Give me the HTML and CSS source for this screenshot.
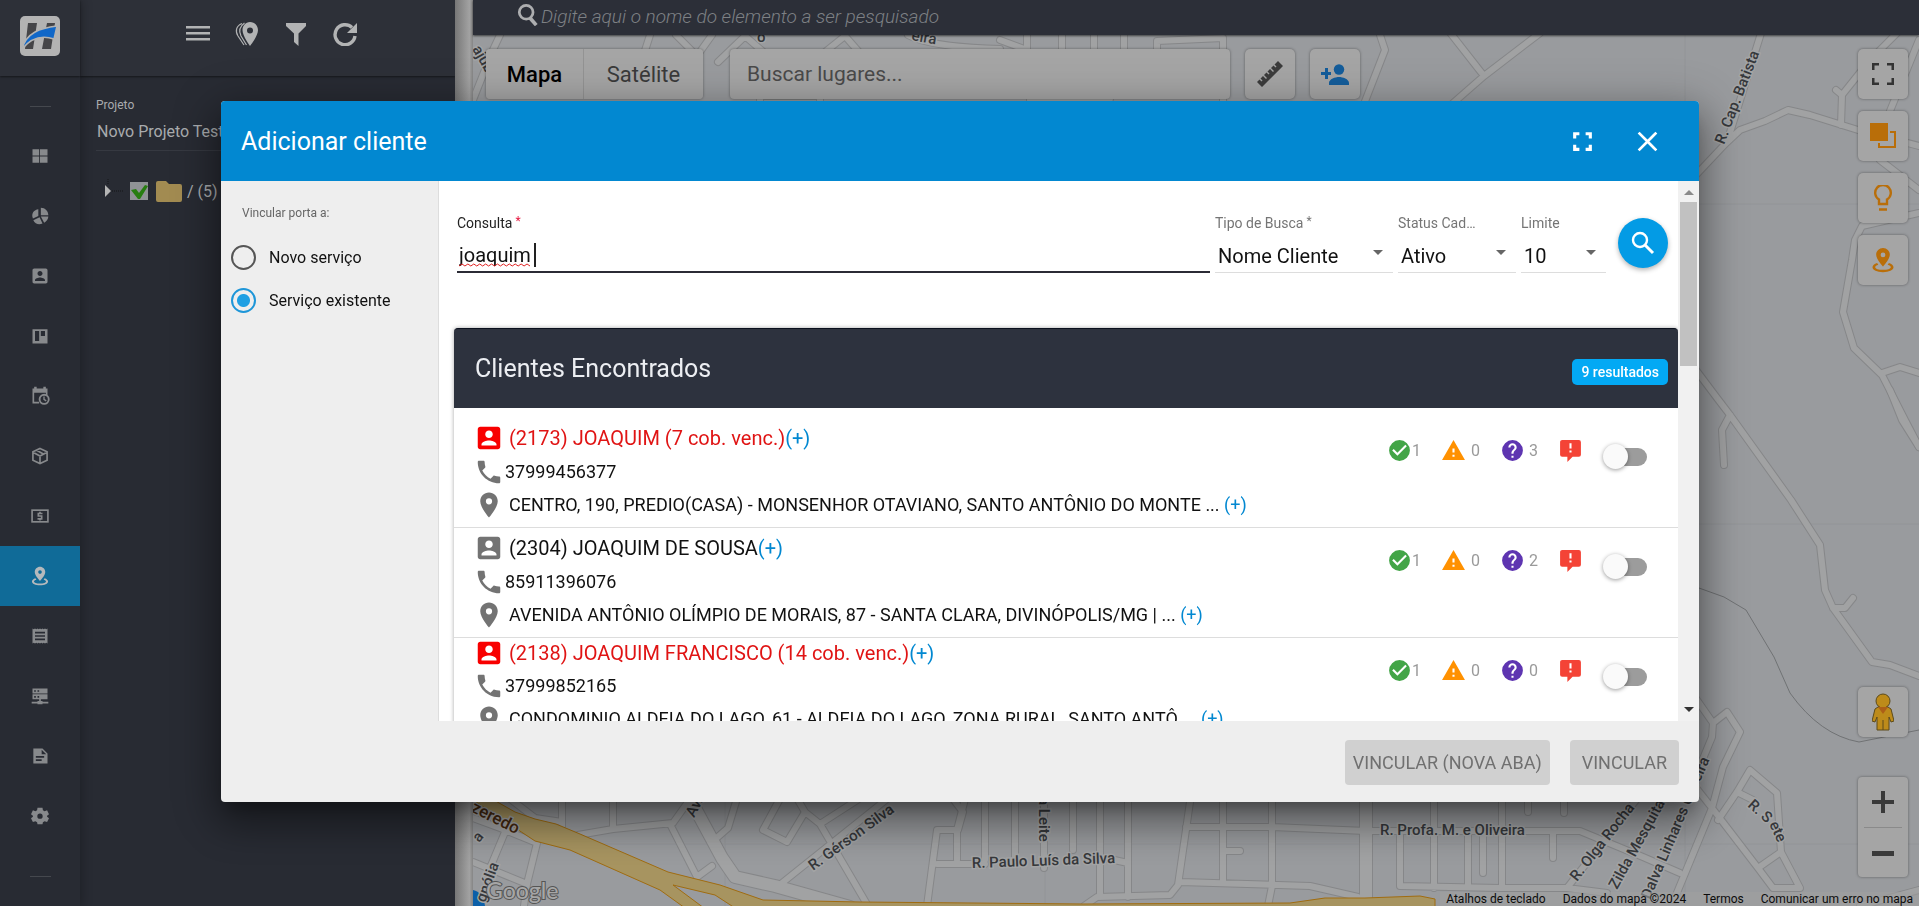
FILE: index.html
```html
<!DOCTYPE html>
<html lang="pt-BR">
<head>
<meta charset="utf-8">
<title>Adicionar cliente</title>
<link rel="stylesheet" href="styles.css">
</head>
<body>
<svg class="sprite" aria-hidden="true">
  <symbol id="i-user" viewBox="0 0 24 24"><path fill-rule="evenodd" d="M3 5v14c0 1.100.9 2 2 2h14c1.100 0 2-.9 2-2V5c0-1.100-.9-2-2-2H5c-1.100 0-2 .9-2 2zm12 4c0 1.660-1.340 3-3 3s-3-1.340-3-3 1.340-3 3-3 3 1.340 3 3zm-9 8c0-2 4-3.100 6-3.100s6 1.100 6 3.100v1H6v-1z"/></symbol>
  <symbol id="i-phone" viewBox="0 0 24 24"><path d="M6.620 10.790c1.440 2.830 3.760 5.140 6.590 6.590l2.200-2.200c.27-.27.67-.36 1.020-.24 1.120.37 2.330.57 3.570.57.55 0 1 .45 1 1V20c0 .55-.45 1-1 1C10.610 21 3 13.390 3 4c0-.55.45-1 1-1h3.500c.55 0 1 .45 1 1 0 1.250.2 2.450.57 3.570.11.35.03.74-.25 1.020l-2.200 2.200z"/></symbol>
  <symbol id="i-place" viewBox="0 0 24 24"><path fill-rule="evenodd" d="M12 2C8.130 2 5 5.130 5 9c0 5.250 7 13 7 13s7-7.750 7-13c0-3.870-3.130-7-7-7zm0 9.500a2.500 2.500 0 1 1 0-5 2.500 2.500 0 0 1 0 5z"/></symbol>
  <symbol id="i-check" viewBox="0 0 24 24"><path fill-rule="evenodd" d="M12 2a10 10 0 1 0 0 20 10 10 0 0 0 0-20zm-2 15-5-5 1.410-1.410L10 14.170l7.590-7.590L19 8z"/></symbol>
  <symbol id="i-warn" viewBox="0 0 24 24"><path fill-rule="evenodd" d="M1 21h22L12 2zm12-3h-2v-2h2zm0-4h-2v-4h2z"/></symbol>
  <symbol id="i-help" viewBox="0 0 24 24"><path fill-rule="evenodd" d="M12 2a10 10 0 1 0 0 20 10 10 0 0 0 0-20zm1 17h-2v-2h2zm2.070-7.750-.9.920C13.450 12.900 13 13.500 13 15h-2v-.5c0-1.100.45-2.100 1.170-2.830l1.240-1.260c.37-.36.59-.86.59-1.410a2 2 0 1 0-4 0H8a4 4 0 1 1 8 0c0 .88-.36 1.680-.93 2.250z"/></symbol>
  <symbol id="i-feedback" viewBox="0 0 24 24"><path fill-rule="evenodd" d="M4 2h16a2 2 0 0 1 2 2v12a2 2 0 0 1-2 2h-6l-5 5v-5H4a2 2 0 0 1-2-2V4c0-1.100.9-2 2-2zm9 12h-2v-2h2zm0-4h-2V5h2z"/></symbol>
  <symbol id="i-fullscreen" viewBox="0 0 24 24"><path d="M3 9V3h6v3H6v3zM15 3h6v6h-3V6h-3zM21 15v6h-6v-3h3v-3zM9 21H3v-6h3v3h3z"/></symbol>
  <symbol id="i-pinring" viewBox="0 0 24 24"><path fill-rule="evenodd" d="M12 1C8.500 1 5.700 3.800 5.700 7.200 5.700 11.500 12 18 12 18s6.300-6.500 6.300-10.800C18.300 3.800 15.500 1 12 1zm0 8.500a2.200 2.200 0 1 1 0-4.400 2.200 2.200 0 0 1 0 4.400z"/><path d="M6.500 14.700C4 15.500 2.300 17 2.300 18.700c0 2.700 4.300 4.500 9.700 4.500s9.700-1.800 9.700-4.500c0-1.700-1.700-3.200-4.200-4l-1.200 1.700c1.800.5 2.900 1.300 2.900 2.200 0 1.400-3.200 2.500-7.200 2.500s-7.200-1.100-7.200-2.500c0-.9 1.100-1.700 2.900-2.200z"/></symbol>
</svg>

<div class="app">
  <nav class="rail" aria-label="Principal">
    <a class="logo" href="#" aria-label="Início"><svg viewBox="0 0 40 40"><rect width="40" height="40" rx="5" fill="#b3b3b3"/><path d="M8 7h9l-4 26H5zM27 7h8l-4 26h-9z" fill="#454548"/><path d="M2 33C6 17 20 12 37 10l-3 13C22 19 11 22 2 33z" fill="#1067c8" stroke="#b3b3b3" stroke-width="1.500"/></svg></a>
    <div class="rail-sep"></div>
    <a class="rail-item" href="#" aria-label="Painel"><svg viewBox="0 0 24 24"><path d="M3 4h8v7.500H3zM12 4h9v7.500h-9zM3 12.500h8V20H3zM12 12.500h9V20h-9z"/></svg></a>
    <a class="rail-item" href="#" aria-label="Gráficos"><svg viewBox="0 0 24 24"><path d="M13 2c5 0 9 4 9 9h-9zM10 4v8l-6.500 3C1 9 5 4.500 10 4zM11.500 13.500 15 21c-5 2-9 0-11-4zM13 12.500h9c0 3-2 6-5 7.500z"/></svg></a>
    <a class="rail-item" href="#" aria-label="Clientes"><svg><use href="#i-user"/></svg></a>
    <a class="rail-item" href="#" aria-label="Quadro"><svg viewBox="0 0 24 24"><path fill-rule="evenodd" d="M3 4h18v17H3zm3 2v12h5V6zm7 0v6h5V6z"/></svg></a>
    <a class="rail-item" href="#" aria-label="Agenda"><svg viewBox="0 0 24 24"><path d="M3 3h2V1h3v2h8V1h3v2h2v8h-2V8H5v11h6v2H3z"/><circle cx="17" cy="16" r="5.500" fill="none" stroke="currentColor" stroke-width="2.200"/><path d="M16 12.500h1.600v3.200l2.300 1.500-.9 1.300-3-2z"/></svg></a>
    <a class="rail-item" href="#" aria-label="Estoque"><svg viewBox="0 0 24 24" fill="none" stroke="currentColor" stroke-width="2"><path d="m12 3 8.500 4v10L12 21l-8.500-4V7zM3.500 7.500 12 12l8.500-4.500M12 12v9M8 5l8 4.500"/></svg></a>
    <a class="rail-item" href="#" aria-label="Financeiro"><svg viewBox="0 0 24 24" fill="none" stroke="currentColor" stroke-width="2"><rect x="2.500" y="5" width="19" height="14"/><path d="M15 9h-5v3h4v3.500H9M12 7v2m0 6v2.500"/></svg></a>
    <a class="rail-item active" href="#" aria-label="Mapa"><svg><use href="#i-pinring"/></svg></a>
    <a class="rail-item" href="#" aria-label="Notas"><svg viewBox="0 0 24 24"><path fill-rule="evenodd" d="m3 3 1.500 1L6 3l1.500 1L9 3l1.500 1L12 3l1.500 1L15 3l1.500 1L18 3l1.500 1L21 3v18l-1.500-1-1.500 1-1.500-1-1.500 1-1.500-1-1.500 1-1.500-1L9 21l-1.500-1L6 21l-1.500-1L3 21zm3 4v2h12V7zm0 4v2h12v-2zm0 4v2h12v-2z"/></svg></a>
    <a class="rail-item" href="#" aria-label="Servidores"><svg viewBox="0 0 24 24"><path fill-rule="evenodd" d="M3 3h18v6H3zm2 2v2h2V5zm4 0v2h2V5zM3 10h18v6H3zm2 2v2h2v-2zm4 0v2h2v-2zM11 16h2v2h2v1h7v2h-7v1H9v-1H2v-2h7v-1h2z"/></svg></a>
    <a class="rail-item" href="#" aria-label="Documentos"><svg viewBox="0 0 24 24"><path fill-rule="evenodd" d="M5 3h10l6 6v12H4V3zm9 1.500V10h5.500zM7 12v2h10v-2zm0 4v2h7v-2z"/></svg></a>
    <a class="rail-item" href="#" aria-label="Configurações"><svg viewBox="0 0 24 24"><path fill-rule="evenodd" d="M9 2h6l.5 3 2 1.200 3-1 2.300 4.600-2.300 2v1l2.300 2-2.300 4.400-3-1-2 1.200L15 22H9l-.5-2.600-2-1.200-3 1-2.300-4.400 2.300-2v-1l-2.300-2 2.300-4.600 3 1 2-1.200zm3 7a3.200 3.200 0 1 0 0 6.400A3.200 3.200 0 0 0 12 9z"/></svg></a>
    <div class="rail-sep end"></div>
  </nav>

  <aside class="project">
    <div class="project-bar">
      <button aria-label="Menu"><svg viewBox="0 0 24 24"><path d="M0 4h24v2.500H0zM0 10h24v2.500H0zM0 16h24v2.500H0z"/></svg></button>
      <button aria-label="Marcadores"><svg viewBox="0 0 24 24"><path fill-rule="evenodd" d="M15 0C10.500 0 7.500 3.700 7.500 8.300 7.500 14 15 24 15 24s8-10 8-15.700C23 3.700 19.500 0 15 0zm0 11.500a3 3 0 1 1 0-6 3 3 0 0 1 0 6z"/><path d="M7 1.500C1 4 0 9 3 14l6 9M9.500 1C4 5 3.500 9 6 14l5.500 9" fill="none" stroke="currentColor" stroke-width="1.200"/></svg></button>
      <button aria-label="Filtrar"><svg viewBox="0 0 24 24"><path d="M2 1h20v3l-7.500 7.500V24L10 20v-8.500L2 4z"/></svg></button>
      <button aria-label="Atualizar"><svg viewBox="0 0 24 24"><path d="M19 5.500A10 10 0 1 0 22 14" fill="none" stroke="currentColor" stroke-width="3.400"/><path d="M24 1v10H14z"/></svg></button>
    </div>
    <div class="project-body">
      <span class="project-label">Projeto</span>
      <div class="project-name">Novo Projeto Teste</div>
      <div class="tree">
        <svg class="tree-arrow" viewBox="0 0 20 24"><path d="M4 0v5M8 12h13" stroke="#151719" stroke-dasharray="1 1" fill="none"/><path d="m1 6 6 6-6 6z" fill="#b5b5b5"/></svg>
        <svg class="tree-check" viewBox="0 0 18 18"><path d="M0 0h18v18H0z" fill="#909396"/><path d="m1 8 5-1 3 4 6-8 3 1-8 13H8z" fill="#277d11"/></svg>
        <svg class="tree-folder" viewBox="0 0 26 21"><path d="M2 0h8l3 3h11q2 0 2 2v14q0 2-2 2H2q-2 0-2-2V2q0-2 2-2z" fill="#a28b51"/></svg>
        <span>/ (5)</span>
      </div>
    </div>
  </aside>
  <div class="splitter"></div>

  <main class="map-col">
    <div class="topbar">
      <svg viewBox="0 0 24 24" fill="none" stroke="currentColor" stroke-width="3"><circle cx="10" cy="9" r="7.500"/><path d="m14 15 7 8" stroke-width="4"/></svg>
      <input class="element-search" type="text" placeholder="Digite aqui o nome do elemento a ser pesquisado" aria-label="Pesquisar elemento">
    </div>
    <div class="map">
      <svg class="map-canvas" viewBox="473 35 1446 871" preserveAspectRatio="xMinYMin slice" aria-label="Mapa">
        <defs>
          <g id="roads">
            <path d="M500 35 492 52 473 100M650 35 642 60M676 35 697 56 712 35M718 62 745 36 775 62M815 60 845 36 866 60M908 35Q930 47 1000 49M1000 40 1027 50M1027 35V60M1062 35V60M1094 35V60M1124 35V60M1157 60V41L1223 38V101M1380 35 1385 50 1364 104M1448 30 1484 76 1540 33M1484 76 1452 104M760 101V96H820V104M1030 104V99H1110"/>
            <path d="M1762 30 1727 142 1695 176M1724 145 1740 130 1765 121 1788 110 1810 115 1858 130 1919 146M1836 90 1842 95 1841 125M1842 95 1870 60 1885 45 1900 30M1880 160 1919 190M1919 40 1890 111M1919 213 1862 226 1855 240 1852 260 1843 312 1854 348 1882 375 1905 420 1919 447M1882 373 1900 367 1919 373"/>
            <path d="M1690 362 1717 398 1730 415 1791 500 1820 545 1825 590 1833 608 1872 662 1890 665 1919 676M1730 415 1722 430 1724 465M1833 608H1845L1853 598M1890 390 1902 420 1919 447"/>
            <path d="M1690 690 1713 723 1712 737 1690 790M1713 723 1727 712 1740 732 1723 767 1712 808 1674 900M1690 780 1712 808 1758 868 1773 888H1800L1781 852 1777 793 1750 770 1737 792 1718 820M1737 792 1753 800M1781 852 1758 868M1860 906 1919 890"/>
            <path d="M473 818 500 828 537 843 527 884 524 906M505 832 490 868M473 862 527 884M505 795 535 818 562 822M562 795V826M578 835 613 829 673 823 693 795M613 795V829M670 824 697 877 712 866M712 842 728 828 738 795M777 887 892 795M782 795 763 830 787 842 805 812 820 824 868 906M805 812 795 795M820 824 865 795M950 795 963 812 958 830"/>
            <path d="M927 906 937 830H957V860M937 864H985M985 795V860M957 830 966 795M1015 795V858M1044 795V868M1073 795V850M1100 795V895M1128 795V897M1105 858 1128 863M1084 906 1097 897 1170 895 1178 885 1191 795M1186 827H1272L1366 831 1500 831H1580L1643 857 1680 873M1223 795V882M1272 795V886L1268 906M1180 882 1310 886 1358 897M1223 851H1240M1434 795V888M1400 835V886L1500 888H1567L1607 893M1468 831V886M1483 831V873M1502 795V888M1528 795V812M1564 795V813M1553 833V858M1567 888 1640 795"/>
          </g>
          <g id="avenues"><path d="M688 795 722 858 735 877 775 886 850 907M1366 795V906"/></g>
        </defs>
        <rect x="473" y="35" width="1446" height="871" fill="#999b9e"/>
        <path class="tile-line" d="M1685 35V906M725 800V906M1045 800V906M473 844H1919M1440 204H1919M1690 524H1919"/>
        <path class="river" d="M1699 588 1724 597 1746 610 1774 657 1790 693Q1820 735 1859 742L1919 730"/>
        <use href="#roads" class="casing"/><use href="#avenues" class="casing wide"/>
        <use href="#roads" class="road"/><use href="#avenues" class="road wide"/>
        <path class="highway" d="M485 795 515 812 535 819 556 824 580 834 668 872 720 885 763 900 860 902 1083 904 1290 903 1325 898 1365 898 1420 896 1435 899V908H735L715 895 673 885 704 908H685L660 890 570 850 535 841 470 798z"/>
        <path d="M473 890q10 2 12 16h-12z" fill="#0c5fa8"/>
        <g class="labels">
          <text transform="translate(1724 145) rotate(-69)">R. Cap. Batista</text>
          <text class="brown" transform="translate(470 811) rotate(27)">zeredo</text>
          <text transform="translate(485 903) rotate(-70)">gnólia</text>
          <text transform="translate(479 843) rotate(-50)">a</text>
          <text transform="translate(694 818) rotate(-62)">Av.</text>
          <text transform="translate(813 871) rotate(-36)">R. Gérson Silva</text>
          <text transform="translate(1039 797) rotate(90)">a Leite</text>
          <text transform="translate(972 868) rotate(-2)">R. Paulo Luís da Silva</text>
          <text x="1380" y="835">R. Profa. M. e Oliveira</text>
          <text transform="translate(1577 882) rotate(-52)">R. Olga Rocha</text>
          <text transform="translate(1617 890) rotate(-61)">Zilda Mesquita</text>
          <text transform="translate(1650 900) rotate(-67)">Dalva Linhares Oliveira</text>
          <text transform="translate(1747 806) rotate(42)">R. S</text>
          <text transform="translate(1769 824) rotate(65)">ete</text>
          <text transform="translate(472 49) rotate(60)">ajub</text>
          <text transform="translate(911 40) rotate(10)">eira</text>
          <text x="757" y="42">o</text>
          <text class="google" x="486" y="899">Google</text>
        </g>
      </svg>

      <div class="map-tools">
        <div class="map-types"><button class="on">Mapa</button><button>Satélite</button></div>
        <input class="places" type="text" placeholder="Buscar lugares..." aria-label="Buscar lugares">
        <button class="square" aria-label="Régua"><svg viewBox="0 0 26 26" fill="#3c3c3c"><path d="M0 21 2.500 18.500l2 2 1-1-2-2L6 15l3 3 1-1-3-3 2.500-2.500 2 2 1-1-2-2L13 8l3 3 1-1-3-3 2.500-2.500 2 2 1-1-2-2L21 0l5 5L5 26z"/></svg></button>
        <button class="square" aria-label="Adicionar cliente"><svg class="i28" viewBox="0 0 28 21" fill="#145d9b"><circle cx="18" cy="5.500" r="5.200"/><path d="M8 21v-2c0-4 6.500-6 10-6s10 2 10 6v2zM4 4h3v4h3v3H7v4H4v-4H0V8h4z"/></svg></button>
      </div>
      <div class="map-side">
        <button class="square" aria-label="Tela cheia"><svg class="thin" viewBox="0 0 24 24" fill="#333"><path d="M1 8V1h7v2.500H3.500V8zM16 1h7v7h-2.500V3.500H16zM23 16v7h-7v-2.500h4.500V16zM8 23H1v-7h2.500v4.500H8z"/></svg></button>
        <button class="square" aria-label="Camadas"><svg viewBox="0 0 26 26" fill="#b96e09"><path d="M0 0h18v18H0zM20 8h6v17H8v-5h2v3h14V10h-4z"/></svg></button>
        <button class="square" aria-label="Viabilidade"><svg viewBox="0 0 24 26" fill="none" stroke="#b96e09" stroke-width="2.400"><path d="M8 19v-4.500a7.800 7.800 0 1 1 8 0V19zM8 24.500h8"/></svg></button>
        <button class="square" aria-label="Localização"><svg fill="#b96e09"><use href="#i-pinring"/></svg></button>
      </div>
      <div class="map-nav">
        <button class="square" aria-label="Street View"><svg class="peg" viewBox="0 0 22 38"><g fill="#bd8b1a" stroke="#5c4a1a"><path d="M6 14h10l3 2 3 12-3 1-2-5v13H5V24l-2 5-3-1 3-12z"/><circle cx="11" cy="8" r="7"/></g><path d="m6 14 5 7 5-7z" fill="#ad5f17"/><path d="M11 27v10" stroke="#5c4a1a"/></svg></button>
        <div class="zoom">
          <button aria-label="Aumentar zoom"><svg viewBox="0 0 22 22"><path d="M9 0h4v9h9v4h-9v9H9v-9H0V9h9z"/></svg></button>
          <button aria-label="Diminuir zoom"><svg viewBox="0 0 22 22"><path d="M0 9h22v5H0z"/></svg></button>
        </div>
      </div>
      <div class="attribution"><button>Atalhos de teclado</button><span>Dados do mapa ©2024</span><a href="#">Termos</a><a href="#">Comunicar um erro no mapa</a></div>
    </div>
  </main>
</div>

<div class="backdrop">
  <section class="dialog" role="dialog" aria-labelledby="dlg-title">
    <header class="dialog-head">
      <h1 id="dlg-title">Adicionar cliente</h1>
      <button aria-label="Maximizar"><svg><use href="#i-fullscreen"/></svg></button>
      <button aria-label="Fechar"><svg viewBox="0 0 24 24" stroke="#fff" stroke-width="2.600"><path d="m3.500 3.500 17 17M20.500 3.500l-17 17"/></svg></button>
    </header>
    <div class="dialog-body">
      <fieldset class="bind">
        <legend>Vincular porta a:</legend>
        <label><input type="radio" name="bind">Novo serviço</label>
        <label><input type="radio" name="bind" checked>Serviço existente</label>
      </fieldset>
      <div class="pane">
        <form class="search">
          <div class="field grow">
            <label for="q">Consulta<sup class="req">*</sup></label>
            <div class="stack">
              <input id="q" type="text" value="joaquim " spellcheck="false">
              <div class="typing"><svg viewBox="0 0 72 4"><path d="M0 3l3-2 3 2 3-2 3 2 3-2 3 2 3-2 3 2 3-2 3 2 3-2 3 2 3-2 3 2 3-2 3 2 3-2 3 2 3-2 3 2 3-2 3 2 3-2 3 2" fill="none" stroke="#e02020"/></svg><i></i></div>
            </div>
          </div>
          <div class="field tipo"><label for="tipo">Tipo de Busca<sup>*</sup></label><div class="stack arrow"><select id="tipo"><option>Nome Cliente</option></select></div></div>
          <div class="field status"><label for="status">Status Cadastro</label><div class="stack arrow"><select id="status"><option>Ativo</option></select></div></div>
          <div class="field limite"><label for="limite">Limite</label><div class="stack arrow"><select id="limite"><option>10</option></select></div></div>
          <button class="fab" type="button" aria-label="Pesquisar"><svg viewBox="0 0 24 24" fill="none" stroke="#fff"><circle cx="9" cy="9" r="7" stroke-width="2.400"/><path d="m14 14 8 8" stroke-width="3"/></svg></button>
        </form>
        <div class="results">
          <div class="results-head"><h2>Clientes Encontrados</h2><span class="badge">9 resultados</span></div>
          <ul>
            <li class="overdue">
              <div class="who">
                <p class="name"><svg><use href="#i-user"/></svg><span>(2173) JOAQUIM (7 cob. venc.)<a href="#">(+)</a></span></p>
                <p class="phone"><svg><use href="#i-phone"/></svg><span>37999456377</span></p>
                <p class="addr"><svg><use href="#i-place"/></svg><span>CENTRO, 190, PREDIO(CASA) - MONSENHOR OTAVIANO, SANTO ANTÔNIO DO MONTE ... <a href="#">(+)</a></span></p>
              </div>
              <div class="stats"><svg class="ok"><use href="#i-check"/></svg><b>1</b><svg class="warn"><use href="#i-warn"/></svg><b>0</b><svg class="ask"><use href="#i-help"/></svg><b>3</b><svg class="bad"><use href="#i-feedback"/></svg><input type="checkbox" aria-label="Selecionar 2173"></div>
            </li>
            <li>
              <div class="who">
                <p class="name"><svg><use href="#i-user"/></svg><span>(2304) JOAQUIM DE SOUSA<a href="#">(+)</a></span></p>
                <p class="phone"><svg><use href="#i-phone"/></svg><span>85911396076</span></p>
                <p class="addr"><svg><use href="#i-place"/></svg><span>AVENIDA ANTÔNIO OLÍMPIO DE MORAIS, 87 - SANTA CLARA, DIVINÓPOLIS/MG | ... <a href="#">(+)</a></span></p>
              </div>
              <div class="stats"><svg class="ok"><use href="#i-check"/></svg><b>1</b><svg class="warn"><use href="#i-warn"/></svg><b>0</b><svg class="ask"><use href="#i-help"/></svg><b>2</b><svg class="bad"><use href="#i-feedback"/></svg><input type="checkbox" aria-label="Selecionar 2304"></div>
            </li>
            <li class="overdue tall">
              <div class="who">
                <p class="name"><svg><use href="#i-user"/></svg><span>(2138) JOAQUIM FRANCISCO (14 cob. venc.)<a href="#">(+)</a></span></p>
                <p class="phone"><svg><use href="#i-phone"/></svg><span>37999852165</span></p>
                <p class="addr"><svg><use href="#i-place"/></svg><span>CONDOMINIO ALDEIA DO LAGO, 61 - ALDEIA DO LAGO, ZONA RURAL, SANTO ANTÔ ... <a href="#">(+)</a></span></p>
              </div>
              <div class="stats"><svg class="ok"><use href="#i-check"/></svg><b>1</b><svg class="warn"><use href="#i-warn"/></svg><b>0</b><svg class="ask"><use href="#i-help"/></svg><b>0</b><svg class="bad"><use href="#i-feedback"/></svg><input type="checkbox" aria-label="Selecionar 2138"></div>
            </li>
          </ul>
        </div>
      </div>
      <div class="scrollbar" aria-hidden="true"><i class="up"></i><i class="thumb"></i><i class="down"></i></div>
    </div>
    <footer class="dialog-foot"><button disabled>VINCULAR (NOVA ABA)</button><button disabled class="last">VINCULAR</button></footer>
  </section>
</div>
</body>
</html>
```
FILE: styles.css
```css
* { box-sizing: border-box; }
body { margin: 0; font-family: Roboto, "Liberation Sans", sans-serif; font-size: 16px; color: #111; overflow: hidden; }
button, input, select { font: inherit; color: inherit; border: 0; padding: 0; margin: 0; background: none; outline: 0; }
a { color: inherit; text-decoration: none; }
p, h1, h2, ul { margin: 0; padding: 0; font-weight: 400; }
svg { display: block; flex: none; }
.sprite { position: absolute; width: 0; height: 0; }

.app { display: flex; height: 100vh; background: #282b33; }

/* icon rail */
.rail { width: 80px; display: flex; flex-direction: column; background: #282b33; color: #87898c; box-shadow: 2px 0 10px rgba(0,0,0,.25); z-index: 1; }
.logo { height: 76px; display: flex; align-items: center; justify-content: center; padding-bottom: 4px; background: #2d3038; box-shadow: 0 1px 2px rgba(0,0,0,.5); }
.logo svg { width: 40px; height: 40px; }
.rail-sep { width: 21px; height: 1px; margin: 30px auto 19px; background: #45484e; flex: none; }
.rail-sep.end { margin-top: 30px; }
.rail-item { height: 60px; display: flex; align-items: center; justify-content: center; flex: none; }
.rail-item svg { width: 20px; height: 20px; fill: currentColor; }
.rail-item svg[fill="none"] { fill: none; }
.rail-item.active { background: #106b98; color: #b5b9bc; }

/* project panel */
.project { width: 375px; color: #a9abae; }
.project-bar { height: 76px; display: flex; align-items: center; justify-content: center; gap: 25px; padding: 0 0 8px 8px; background: #2d3038; box-shadow: 0 1px 2px rgba(0,0,0,.5); color: #b2b3b4; }
.project-bar svg { width: 24px; height: 24px; fill: currentColor; }
.project-body { padding: 20px 16px; }
.project-label { display: block; font-size: 12px; line-height: 18px; }
.project-name { font-size: 16px; line-height: 36px; padding-left: 1px; border-bottom: 1px solid #363941; white-space: nowrap; }
.tree { display: flex; align-items: center; font-size: 16px; padding: 28px 0 0 8px; }
.tree-arrow { width: 20px; height: 24px; margin-right: 6px; }
.tree-check { width: 18px; height: 18px; margin-right: 8px; }
.tree-folder { width: 26px; height: 21px; margin-right: 5px; }
.splitter { width: 18px; background: linear-gradient(90deg, #777, #a2a2a2 80%, #858585); }

/* map column */
.map-col { flex: 1; min-width: 0; display: flex; flex-direction: column; }
.topbar { height: 35px; display: flex; align-items: flex-start; padding: 4px 0 0 44px; gap: 2px; background: #2c2f38; color: #adaeb0; box-shadow: 0 1px 2px rgba(0,0,0,.6); z-index: 1; }
.topbar svg { width: 22px; height: 22px; }
.element-search { flex: 1; height: 24px; font-size: 19px; font-style: italic; font-weight: 300; }
.element-search::placeholder { color: #7d8084; opacity: 1; }
.map { flex: 1; position: relative; overflow: hidden; }
.map-canvas { position: absolute; inset: 0; width: 100%; height: 100%; }
.casing, .road { fill: none; stroke-linecap: round; stroke-linejoin: round; }
.casing { stroke: #868789; stroke-width: 8px; }
.road { stroke: #a1a2a3; stroke-width: 6px; }
.casing.wide { stroke-width: 14px; }
.road.wide { stroke-width: 12px; }
.tile-line { stroke: #929497; fill: none; }
.river { stroke: #707274; fill: none; }
.highway { fill: #a79460; stroke: #a06c10; }
.labels text { font-size: 15px; font-weight: 500; fill: #36383b; stroke: #a3a4a5; stroke-width: 3px; paint-order: stroke; }
.labels .brown { fill: #43280f; font-size: 17px; }
.labels .google { font-family: Lato, sans-serif; font-size: 23px; fill: #a6a6a6; stroke: #555; stroke-width: 2px; }

.map-tools { position: absolute; top: 14px; left: 13px; display: flex; }
.map-types { display: flex; margin-right: 27px; border-radius: 4px; box-shadow: 0 0 3px rgba(0,0,0,.4); }
.map-types button { height: 50px; width: 119px; font-size: 22px; color: #3a3a3a; background: #a5a5a5; border-radius: 0 4px 4px 0; }
.map-types .on { width: 98px; font-weight: 500; color: #000; border-right: 1px solid #939393; border-radius: 4px 0 0 4px; }
.places { width: 500px; height: 50px; padding: 0 17px; font-size: 21px; background: #a5a5a5; border-radius: 4px; box-shadow: 0 0 3px rgba(0,0,0,.4); }
.places::placeholder { color: #4a4a4a; opacity: 1; }
.square { width: 50px; height: 50px; display: flex; align-items: center; justify-content: center; background: #a5a5a5; border-radius: 5px; box-shadow: 0 0 3px rgba(0,0,0,.4); }
.square svg { width: 26px; height: 26px; }
.square .thin { width: 24px; height: 24px; }
.square .i28 { width: 28px; height: 21px; }
.square .peg { width: 22px; height: 38px; }
.map-tools .square { margin-left: 15px; }
.map-side { position: absolute; top: 14px; right: 11px; display: grid; gap: 12px; }
.map-nav { position: absolute; right: 11px; bottom: 29px; display: grid; gap: 40px; }
.zoom { background: #a5a5a5; border-radius: 4px; box-shadow: 0 0 3px rgba(0,0,0,.4); padding: 0 6px; }
.zoom button { width: 38px; height: 50px; display: grid; place-items: center; }
.zoom button + button { border-top: 1px solid #8a8a8a; }
.zoom svg { width: 22px; height: 22px; fill: #3a3a3a; }
.attribution { position: absolute; right: 0; bottom: 0; display: flex; gap: 17px; padding: 0 6px; font-size: 12px; line-height: 14px; color: #0c0c0c; background: rgba(160,160,160,.6); }

/* dialog */
.backdrop { position: fixed; inset: 0; display: flex; padding: 101px 220px 104px 221px; z-index: 5; }
.dialog { flex: 1; min-width: 0; display: flex; flex-direction: column; background: #eee; border-radius: 4px; overflow: hidden; box-shadow: 0 11px 15px -7px rgba(0,0,0,.3), 0 20px 38px 3px rgba(0,0,0,.3), 0 9px 46px 8px rgba(0,0,0,.2); }
.dialog-head { height: 80px; flex: none; display: flex; align-items: center; gap: 40px; padding: 0 39px 0 20px; background: #0288d1; color: #fff; }
.dialog-head h1 { flex: 1; font-size: 25px; }
.dialog-head svg { width: 25px; height: 25px; fill: #fff; }
.dialog-body { flex: 1; min-height: 0; display: flex; }
.bind { width: 218px; margin: 0; padding: 21px 10px; border: 0; border-right: 1px solid #ddd; display: flex; flex-direction: column; gap: 18px; }
.bind legend { float: left; padding: 0 0 3px 11px; font-size: 12px; line-height: 22px; color: #666; }
.bind label { display: flex; align-items: center; gap: 13px; height: 25px; font-size: 16px; }
.bind input { appearance: none; width: 25px; height: 25px; border: 2px solid #555; border-radius: 50%; }
.bind input:checked { border-color: #1e96d8; background: radial-gradient(circle, #1e9fe3 0 6px, transparent 7px); }
.pane { flex: 1; min-width: 0; padding: 32px 0 0 15px; background: #fff; overflow: hidden; }

.search { display: flex; gap: 5px; padding: 0 10px 0 3px; height: 115px; align-items: flex-start; }
.field { display: flex; flex-direction: column; min-width: 0; }
.field label { font-size: 14px; line-height: 20px; color: #757575; white-space: nowrap; overflow: hidden; text-overflow: ellipsis; }
.field sup { font-size: 12px; line-height: 0; margin-left: 3px; vertical-align: 3px; }
.field .req { color: #e5173f; }
.grow { flex: 1; }
.grow label { color: #222; }
.tipo { width: 178px; }
.status { width: 118px; }
.status label { padding-right: 36px; }
.limite { width: 85px; }
.stack { display: grid; height: 40px; border-bottom: 1px solid #ddd; }
.stack > *, .stack.arrow::after { grid-area: 1 / 1; }
.grow .stack { border-bottom: 2px solid #2b2b35; }
.stack input, .stack select { width: 100%; padding: 5px 2px 0; font-size: 20px; appearance: none; }
.stack select { padding: 6px 3px 0; }
.stack.arrow::after { content: ""; justify-self: end; align-self: center; margin-right: 10px; border: 5px solid transparent; border-top-color: #666; border-bottom: 0; }
.typing { display: flex; align-items: flex-end; padding: 0 0 4px 2px; gap: 4px; pointer-events: none; }
.typing svg { width: 71px; height: 4px; }
.typing i { width: 2px; height: 24px; background: #222; }
.fab { width: 50px; height: 50px; margin: 5px 0 0 7px; display: grid; place-items: center; background: #039be5; border-radius: 50%; box-shadow: 0 2px 5px rgba(0,0,0,.3); flex: none; }
.fab svg { width: 24px; height: 24px; }

.results { box-shadow: 0 0 4px rgba(0,0,0,.35); border-radius: 4px 4px 0 0; }
.results-head { height: 80px; display: flex; align-items: center; justify-content: space-between; padding: 0 10px 0 21px; background: #2d323e; border-top: 1px solid #0a0f1d; border-radius: 4px 4px 0 0; }
.results-head h2 { font-size: 25px; color: #eceef2; }
.badge { margin-top: 6px; padding: 0 9px; font-size: 14px; line-height: 26px; font-weight: 500; color: #fff; background: #03a9f4; border-radius: 5px; }
.results ul { list-style: none; padding-top: 10px; }
.results li { height: 110px; display: flex; justify-content: space-between; align-items: flex-start; padding: 4px 31px 0 20px; border-bottom: 1px solid #ddd; }
.results li.tall { padding-top: 0; }
.who p { display: flex; align-items: center; white-space: nowrap; }
.who svg { width: 30px; height: 30px; fill: #737373; }
.who a { color: #0288d1; }
.name { height: 31px; gap: 5px; font-size: 20px; }
.overdue .name { color: #e01414; }
.overdue .name svg { fill: #f80000; }
.tall .name { height: 29px; }
.phone { height: 37px; font-size: 18px; }
.phone span, .addr span { font-size: 18px; }
.phone { gap: 1px; }
.addr { height: 29px; gap: 5px; }
.stats { display: flex; align-items: center; height: 26px; margin-top: 15px; color: #9a9a9a; }
.tall .stats { margin-top: 19px; }
.stats svg { width: 25px; height: 25px; }
.stats b { width: 17px; font-weight: 400; font-size: 16px; }
.stats .ok { fill: #43a547; }
.stats .warn { fill: #ff9100; margin: 0 5px 0 12px; }
.stats .ask { fill: #5e35b1; margin: 0 4px 0 12px; }
.stats .bad { fill: #f44336; margin-left: 12px; }
.stats input { appearance: none; display: flex; align-items: center; width: 37px; height: 18px; margin: 13px 0 0 27px; border-radius: 9px; background: #9c9c9c; }
.stats input::before { content: ""; width: 25px; height: 25px; margin-left: -7px; flex: none; border-radius: 50%; background: #fafafa; box-shadow: 0 1px 4px rgba(0,0,0,.4); }

.scrollbar { width: 21px; display: flex; flex-direction: column; align-items: center; background: #f1f1f1; }
.scrollbar i { flex: none; }
.scrollbar .up { border: 5px solid transparent; border-bottom-color: #8a8a8a; border-top: 0; margin: 9px 0 7px; }
.scrollbar .thumb { width: 17px; height: 164px; background: #c1c1c1; }
.scrollbar .down { margin: auto 0 9px; border: 5px solid transparent; border-top-color: #333; border-bottom: 0; }
.dialog-foot { height: 81px; flex: none; display: flex; justify-content: flex-end; gap: 20px; padding: 19px 20px 17px; }
.dialog-foot button { padding: 0 8px; font-size: 18px; color: #707070; background: #d0d0d0; border-radius: 4px; }
.dialog-foot .last { padding: 0 12px; }
```
